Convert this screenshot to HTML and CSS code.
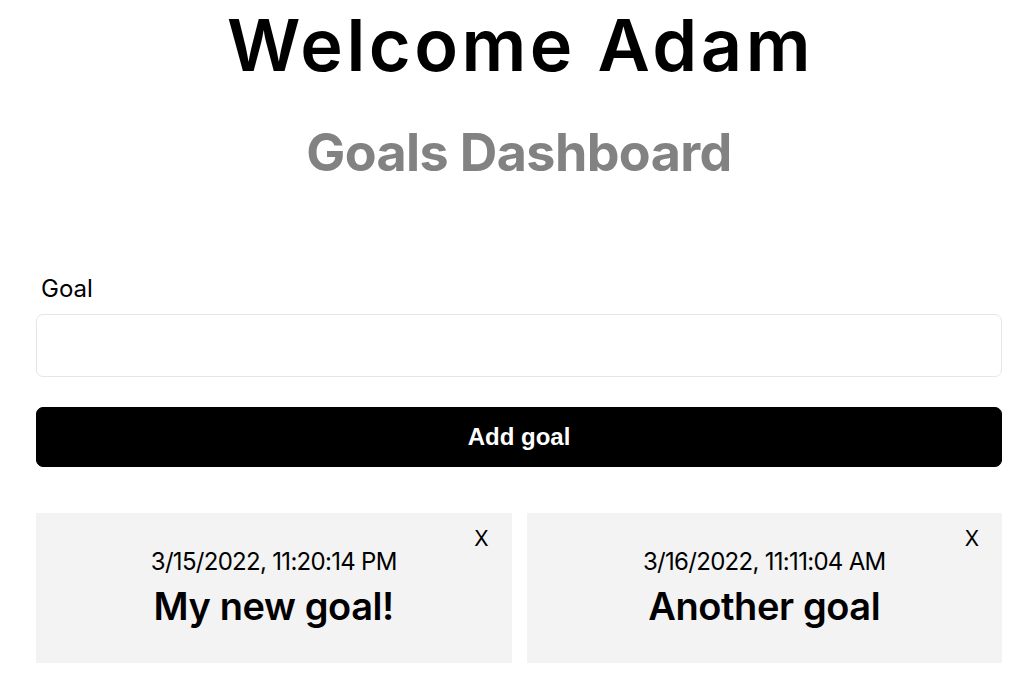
FILE: index.html
```html
<!DOCTYPE html>
<html lang="en">
<head>
<meta charset="utf-8">
<title>Goals Dashboard</title>
<link rel="stylesheet" href="styles.css">
</head>
<body>
<div class="container">
  <section class="heading">
    <h1>Welcome Adam</h1>
    <p>Goals Dashboard</p>
  </section>
  <section class="form">
    <form>
      <div class="form-group">
        <label for="text">Goal</label>
        <input type="text" id="text" name="text">
      </div>
      <div class="form-group">
        <button class="btn btn-block" type="button">Add goal</button>
      </div>
    </form>
  </section>
  <section class="goals">
    <div class="goal">
      <div class="date">3/15/2022, 11:20:14 PM</div>
      <h2>My new goal!</h2>
      <button class="close" type="button">X</button>
    </div>
    <div class="goal">
      <div class="date">3/16/2022, 11:11:04 AM</div>
      <h2>Another goal</h2>
      <button class="close" type="button">X</button>
    </div>
  </section>
</div>
</body>
</html>
```

FILE: styles.css
```css
* { box-sizing: border-box; }
body {
  margin: 0;
  font-family: "Inter", "Open Sans", sans-serif;
  color: #000;
  background: #fff;
}
.container {
  padding: 0 31px 0 36px;
  text-align: center;
}
.heading h1 {
  margin: 2px 0 0;
  padding-left: 3px;
  font-size: 72px;
  line-height: 86px;
  font-weight: 600;
  letter-spacing: 3.5px;
}
.heading p {
  margin: 34px 0 0;
  font-size: 52px;
  line-height: 62px;
  font-weight: 700;
  letter-spacing: -0.6px;
  color: #828282;
}
.form { margin-top: 87px; }
.form-group label {
  display: block;
  text-align: left;
  margin: 0 0 7px 5px;
  font-size: 24px;
  line-height: 36px;
}
.form-group input {
  display: block;
  width: 100%;
  height: 63px;
  padding: 15px;
  border: 1px solid #e6e6e6;
  border-radius: 7px;
  margin-bottom: 30px;
  font-family: inherit;
  font-size: 24px;
}
.btn {
  height: 60px;
  border: 1px solid #000;
  border-radius: 7px;
  background: #000;
  color: #fff;
  font-family: "Liberation Sans", Arial, sans-serif;
  font-size: 24px;
  font-weight: 700;
}
.btn-block {
  width: 100%;
  display: flex;
  align-items: center;
  justify-content: center;
}
.goals {
  margin-top: 46px;
  display: grid;
  grid-template-columns: 1fr 1fr;
  gap: 15px;
}
.goal {
  position: relative;
  height: 150px;
  padding-top: 31px;
  background: #f3f3f3;
}
.goal .date {
  font-size: 24px;
  line-height: 36px;
  letter-spacing: -0.7px;
}
.goal h2 {
  margin: 3px 0 0;
  font-size: 38px;
  line-height: 46px;
  font-weight: 600;
  letter-spacing: -0.4px;
}
.goal .close {
  position: absolute;
  top: 15px;
  right: 23px;
  padding: 0;
  border: none;
  background: none;
  font-family: inherit;
  font-size: 21px;
  line-height: 21px;
  color: #000;
}
```
